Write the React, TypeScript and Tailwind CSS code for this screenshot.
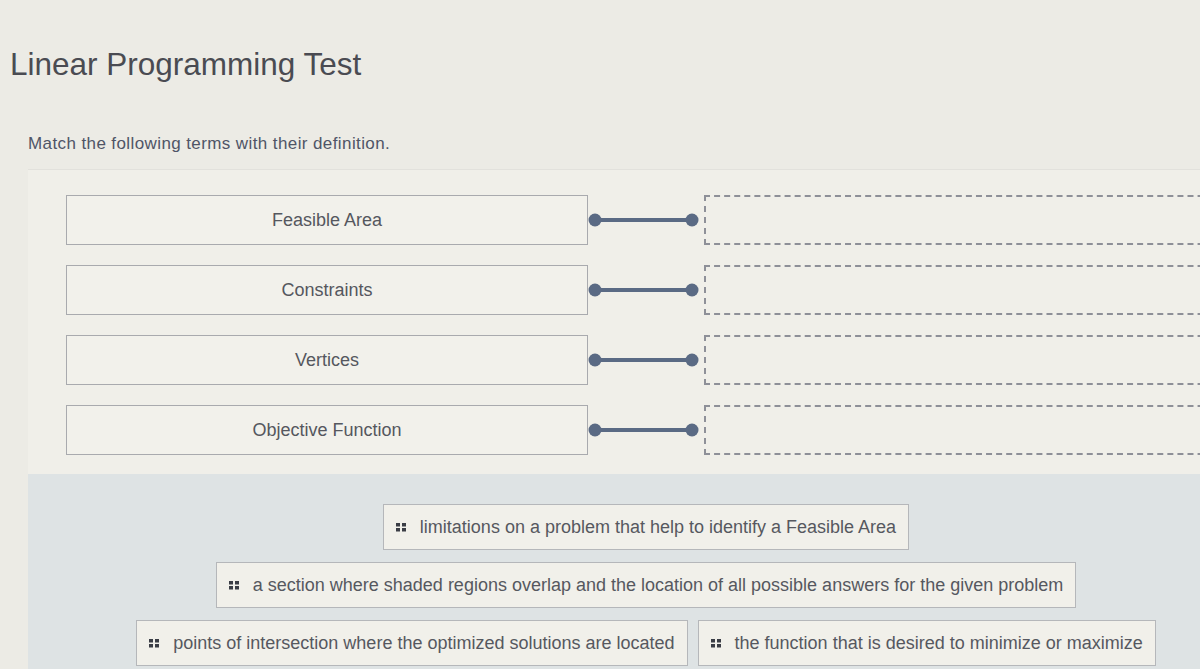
import React from 'react';

const terms = ['Feasible Area', 'Constraints', 'Vertices', 'Objective Function'];

const answers = [
  'limitations on a problem that help to identify a Feasible Area',
  'a section where shaded regions overlap and the location of all possible answers for the given problem',
  'points of intersection where the optimized solutions are located',
  'the function that is desired to minimize or maximize',
];

function Grip() {
  return (
    <svg width="10" height="10" viewBox="0 0 10 10" className="shrink-0">
      <rect x="0" y="1" width="4" height="3.5" fill="#3a3d45" />
      <rect x="6" y="1" width="4" height="3.5" fill="#3a3d45" />
      <rect x="0" y="6" width="4" height="3.5" fill="#3a3d45" />
      <rect x="6" y="6" width="4" height="3.5" fill="#3a3d45" />
    </svg>
  );
}

function Connector() {
  return (
    <svg width="117" height="50" viewBox="0 0 117 50" className="shrink-0 -ml-[1px]">
      <line x1="8" y1="25" x2="105" y2="25" stroke="#5a6a84" strokeWidth="4" />
      <circle cx="8" cy="25" r="6.5" fill="#5a6a84" />
      <circle cx="105" cy="25" r="6.5" fill="#5a6a84" />
    </svg>
  );
}

export default function App() {
  return (
    <div className="w-[1200px] h-[669px] overflow-hidden bg-[#ecebe5] font-['Liberation_Sans',Arial,sans-serif]">
      <h1 className="pt-[46px] pl-[10px] text-[31.5px] leading-[36px] text-[#4a4b52] font-normal">
        Linear Programming Test
      </h1>
      <p className="mt-[52px] pl-[28px] text-[17px] tracking-[0.4px] leading-[20px] text-[#4f5567]">
        Match the following terms with their definition.
      </p>

      <div className="ml-[28px] mt-[15px] w-[1236px] bg-[#f0efe9] border-t border-[#e2e1dc]">
        <div className="flex flex-col gap-[20px] pt-[25px] pb-[19px]">
          {terms.map(term => (
            <div key={term} className="flex items-center">
              <div className="ml-[38px] w-[522px] h-[50px] border border-[#a9aaae] bg-[#f2f1eb] flex items-center justify-center text-[18px] text-[#55575e]">
                {term}
              </div>
              <Connector />
              <div className="w-[560px] h-[50px] border-2 border-dashed border-[#8e9098]" />
            </div>
          ))}
        </div>

        <div className="bg-[#dee3e4] pt-[30px] pb-[20px] flex flex-wrap justify-center gap-x-[10px] gap-y-[12px]">
          {answers.map(a => (
            <div
              key={a}
              className="h-[46px] px-[12px] flex items-center gap-[14px] border border-[#b5b7ba] bg-[#f1f0ea] text-[18px] text-[#56585f] whitespace-nowrap"
            >
              <Grip />
              <span>{a}</span>
            </div>
          ))}
        </div>
      </div>
    </div>
  );
}
